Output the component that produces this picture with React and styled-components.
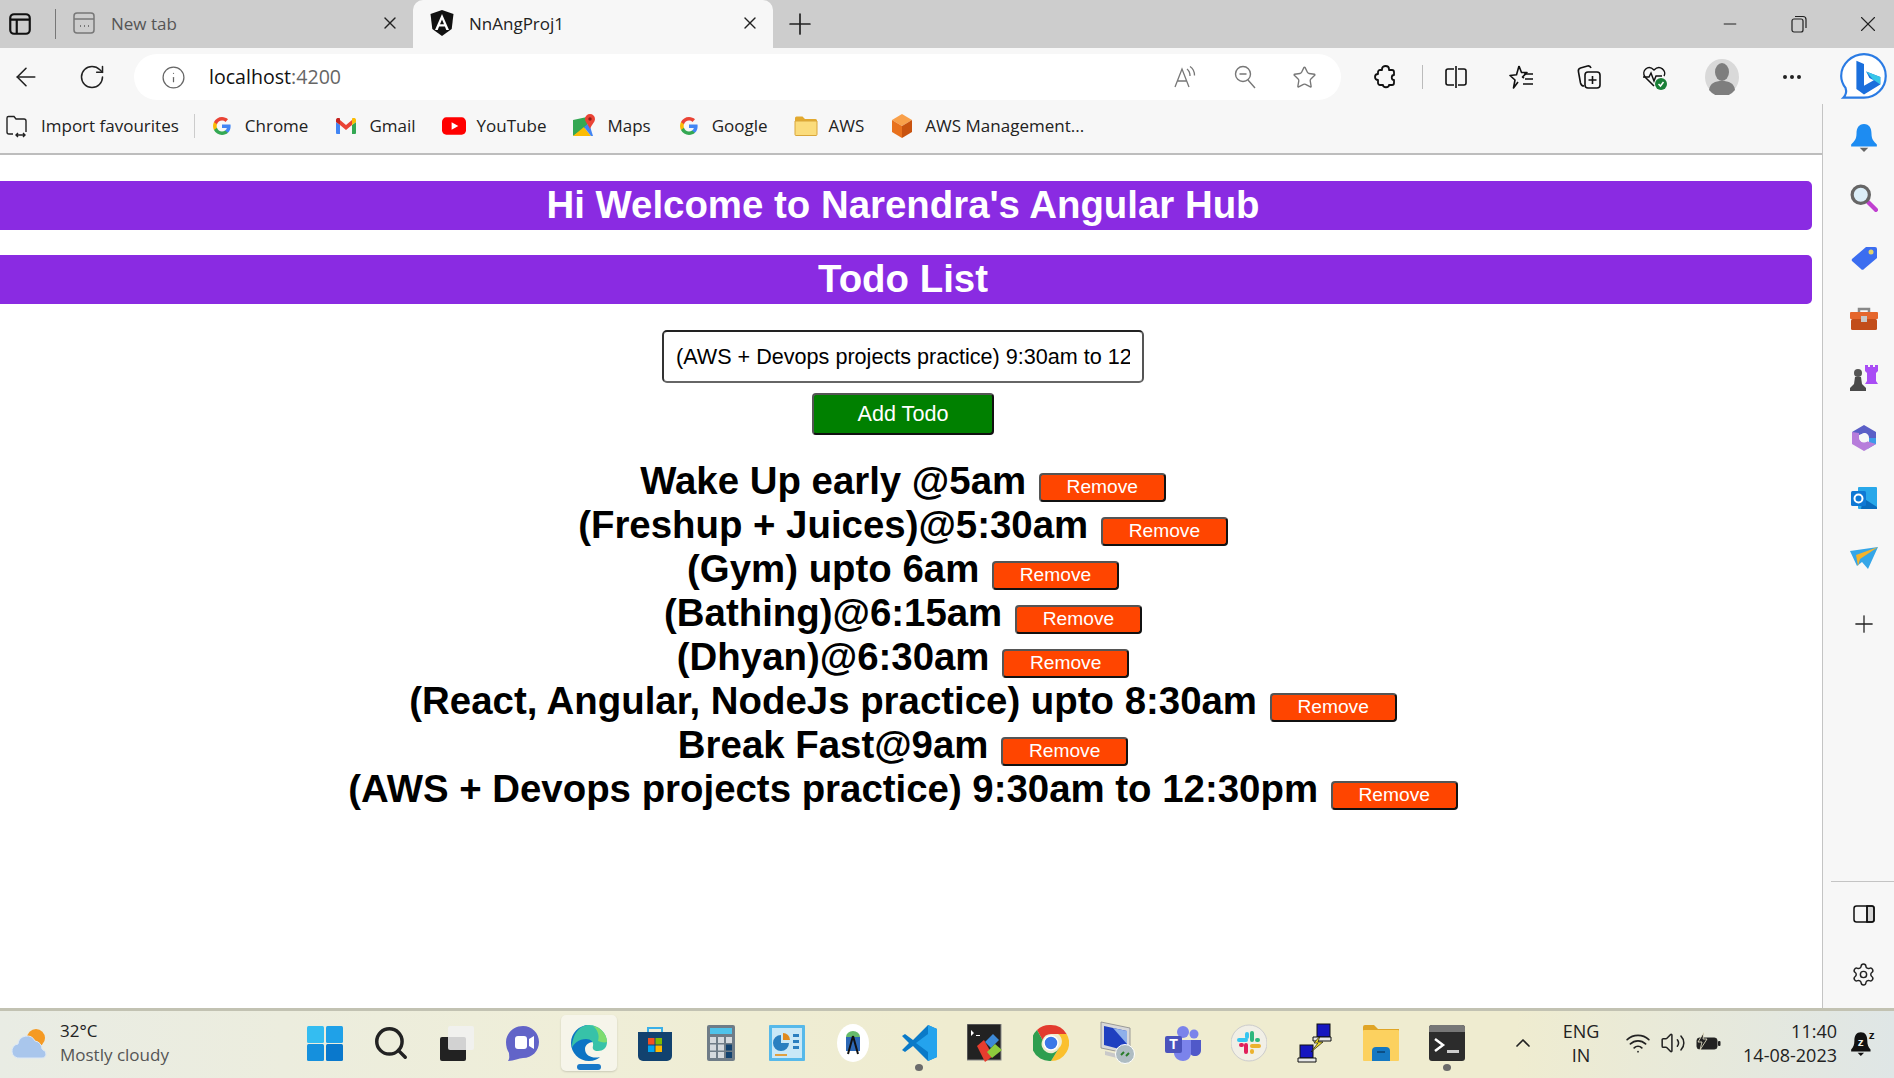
import styled, { createGlobalStyle } from 'styled-components';
import {
  ArrowLeft, RotateCw, Info, Star, Plus, X, Minus, Ellipsis, Settings, Volume2, Wifi, ChevronUp, Search,
} from 'lucide-react';

const todos = [
  'Wake Up early @5am',
  '(Freshup + Juices)@5:30am',
  '(Gym) upto 6am',
  '(Bathing)@6:15am',
  '(Dhyan)@6:30am',
  '(React, Angular, NodeJs practice) upto 8:30am',
  'Break Fast@9am',
  '(AWS + Devops projects practice) 9:30am to 12:30pm',
];

const GoogleG = () => (
  <svg width="18" height="18" viewBox="0 0 24 24">
    <path fill="#4285F4" d="M23.49 12.27c0-.79-.07-1.54-.19-2.27H12v4.51h6.47c-.29 1.48-1.14 2.73-2.4 3.58v3h3.86c2.26-2.09 3.56-5.17 3.56-8.82z" />
    <path fill="#34A853" d="M12 24c3.24 0 5.95-1.08 7.93-2.91l-3.86-3c-1.08.72-2.45 1.16-4.07 1.16-3.13 0-5.78-2.11-6.73-4.96H1.29v3.09C3.26 21.3 7.31 24 12 24z" />
    <path fill="#FBBC05" d="M5.27 14.29c-.25-.72-.38-1.49-.38-2.29s.14-1.57.38-2.29V6.62H1.29C.47 8.24 0 10.06 0 12s.47 3.76 1.29 5.38l3.98-3.09z" />
    <path fill="#EA4335" d="M12 4.75c1.77 0 3.35.61 4.6 1.8l3.42-3.42C17.95 1.19 15.24 0 12 0 7.31 0 3.26 2.7 1.29 6.62l3.98 3.09C6.22 6.86 8.87 4.75 12 4.75z" />
  </svg>
);

const ImportIcon = () => (
  <svg width="26" height="26" viewBox="0 0 26 26" fill="none" stroke="#222" strokeWidth="1.4">
    <path d="M9 21H5a2 2 0 0 1-2-2V5a1.500 1.500 0 0 1 1.500-1.500H10l2 2.500h8a2 2 0 0 1 2 2V19" />
    <path d="M12 22h9M14 20l-2 2 2 2M19 20l2 2-2 2" />
  </svg>
);

const GmailIcon = () => (
  <svg width="22" height="18" viewBox="0 0 22 18">
    <path fill="#4285F4" d="M1 5v11a1 1 0 0 0 1 1h3V8z" />
    <path fill="#34A853" d="M21 5v11a1 1 0 0 1-1 1h-3V8z" />
    <path fill="#EA4335" d="M5 8v-5l6 5 6-5v5l-6 5z" />
    <path fill="#C5221F" d="M1 5V3c0-2 2.500-2.500 4-1.500V8z" />
    <path fill="#FBBC04" d="M21 5V3c0-2-2.500-2.500-4-1.500V8z" />
  </svg>
);

const YoutubeIcon = () => (
  <svg width="25" height="18" viewBox="0 0 25 18">
    <rect width="25" height="18" rx="4.500" fill="#f00" />
    <path fill="#fff" d="M10 5l7 4-7 4z" />
  </svg>
);

const MapsIcon = () => (
  <svg width="24" height="24" viewBox="0 0 24 24">
    <path fill="#34A853" d="M1 6l14-3v10L1 22z" />
    <path fill="#FBBC04" d="M1 22l11-9 7 9z" />
    <path fill="#4285F4" d="M12 13l5-4 4 13h-2z" />
    <path fill="#EA4335" d="M18 0a5 5 0 0 1 5 5c0 3-3 5-5 10-2-5-5-7-5-10a5 5 0 0 1 5-5z" />
    <circle cx="18" cy="5" r="1.700" fill="#8e1c14" />
  </svg>
);

const FolderIcon = () => (
  <svg width="24" height="22" viewBox="0 0 24 22">
    <path fill="#e2a92f" d="M1 3a1.500 1.500 0 0 1 1.500-1.500h6L11 4h10.500A1.500 1.500 0 0 1 23 5.500V7H1z" />
    <path fill="#fbdc7c" stroke="#d9a63a" d="M1 6h22v13.500a1 1 0 0 1-1 1H2a1 1 0 0 1-1-1z" />
  </svg>
);

const CubeIcon = () => (
  <svg width="24" height="26" viewBox="0 0 24 26">
    <path fill="#f9a04a" d="M12 1l10 6-10 6L2 7z" />
    <path fill="#e8711d" d="M2 7l10 6v12L2 19z" />
    <path fill="#c9530f" d="M22 7l-10 6v12l10-6z" />
  </svg>
);

const bookmarks = [
  { label: 'Chrome', icon: <GoogleG /> },
  { label: 'Gmail', icon: <GmailIcon /> },
  { label: 'YouTube', icon: <YoutubeIcon /> },
  { label: 'Maps', icon: <MapsIcon /> },
  { label: 'Google', icon: <GoogleG /> },
  { label: 'AWS', icon: <FolderIcon /> },
  { label: 'AWS Management...', icon: <CubeIcon /> },
];

const PanelIcon = () => (
  <svg width="26" height="26" viewBox="0 0 24 24" fill="none" stroke="#111" strokeWidth="2">
    <rect x="3" y="3" width="18" height="18" rx="3.500" />
    <path d="M3 8h18M9 8v13" />
  </svg>
);

const NewTabIcon = () => (
  <svg width="22" height="24" viewBox="0 0 22 24" fill="none" stroke="#777" strokeWidth="1.500">
    <rect x="1" y="2" width="20" height="20" rx="3" />
    <path d="M1 8h20" />
    <path d="M7 15h1M11 15h1M15 15h1" strokeWidth="2" />
  </svg>
);

const AngularIcon = () => (
  <svg width="24" height="26" viewBox="0 0 24 26">
    <path fill="#111" d="M12 0l11.500 4-1.800 15L12 26 2.300 19 .5 4z" />
    <path fill="#fff" d="M12 4L5 20h2.700l1.400-3.500h5.800l1.400 3.500H19zm-2 10.300L12 9.500l2 4.800z" />
  </svg>
);

const RestoreIcon = () => (
  <svg width="16" height="18" viewBox="0 0 16 18" fill="none" stroke="#222" strokeWidth="1.200">
    <rect x="1" y="4" width="11" height="13" rx="2" />
    <path d="M4 1.500h8a3 3 0 0 1 3 3V13" />
  </svg>
);

const ReadAloudIcon = () => (
  <svg width="26" height="26" viewBox="0 0 26 26" fill="none" stroke="#777" strokeWidth="1.300">
    <path d="M3 23L10 5l7 18M5.500 17h9" />
    <path d="M15 5c2 1.500 3 4 3 7M18 2.500c3 2 4.500 5.500 4.500 9" />
  </svg>
);

const ZoomOutGlyph = () => (
  <svg width="24" height="26" viewBox="0 0 24 26" fill="none" stroke="#777" strokeWidth="1.400">
    <circle cx="10" cy="10" r="7.500" />
    <path d="M6.500 10h7M15 16l7 8" />
  </svg>
);

const PuzzleIcon = () => (
  <svg width="24" height="26" viewBox="0 0 24 26" fill="none" stroke="#111" strokeWidth="1.800" strokeLinejoin="round">
    <path d="M9 5c0-4 7-4 7 0v1h3a2 2 0 0 1 2 2v3c-3 0-3 5 0 5v3a2 2 0 0 1-2 2h-3c0 3-6 3-6 0H7a2 2 0 0 1-2-2v-3c-4 0-4-6 0-6V8a2 2 0 0 1 2-2h2z" />
  </svg>
);

const SplitIcon = () => (
  <svg width="24" height="26" viewBox="0 0 24 26" fill="none" stroke="#111" strokeWidth="1.600">
    <path d="M10 5H4a2 2 0 0 0-2 2v12a2 2 0 0 0 2 2h6M14 5h6a2 2 0 0 1 2 2v12a2 2 0 0 1-2 2h-6M12 2v22" />
  </svg>
);

const FavListIcon = () => (
  <svg width="26" height="26" viewBox="0 0 26 26" fill="none" stroke="#111" strokeWidth="1.600" strokeLinejoin="round">
    <path d="M10 2l2.500 6.500H18L13.500 13l1.500 1M9 18l-4.500 6 1.500-8-5-4.500 6.500-.8L10 2" />
    <path d="M15 10h9M16 15h8M14 20h10" />
  </svg>
);

const CollectionsIcon = () => (
  <svg width="26" height="26" viewBox="0 0 26 26" fill="none" stroke="#111" strokeWidth="1.600">
    <path d="M8 22c-2 0-3-1-3.500-3L2.500 8c-.5-2 .5-3.500 2-4l7-2c2-.5 3 .5 3.500 2" />
    <rect x="9" y="8" width="15" height="16" rx="3" />
    <path d="M16.500 12v8M12.500 16h8" />
  </svg>
);

const HealthIcon = () => (
  <svg width="28" height="28" viewBox="0 0 28 28" fill="none">
    <path stroke="#111" strokeWidth="1.500" d="M13 23L4 14C0 8 7 1 13 7c6-6 13 1 10 6" />
    <path stroke="#111" strokeWidth="1.500" d="M2 14h6l2-4 3 8 2-5h6" />
    <circle cx="20" cy="21" r="6" fill="#1a7f37" />
    <path stroke="#fff" strokeWidth="1.500" d="M17.500 21l2 2 3-4" />
  </svg>
);

const AvatarIcon = () => (
  <svg width="34" height="36" viewBox="0 0 34 36">
    <ellipse cx="17" cy="18" rx="17" ry="18" fill="#d9d9d9" />
    <ellipse cx="17" cy="13" rx="7" ry="9" fill="#7e7e7e" />
    <path fill="#7e7e7e" d="M4 31c1-7 6-9 13-9s12 2 13 9a17 18 0 0 1-26 0z" />
  </svg>
);

const BingIcon = () => (
  <svg width="50" height="50" viewBox="0 0 46 46" fill="none">
    <path fill="#fff" stroke="#2a7be4" strokeWidth="2" d="M23 2c11 0 20 9 20 20s-9 20-20 20H4c3-3 3-6 2-9-3-4-4-7-4-11C2 11 12 2 23 2z" />
    <path fill="#1b6fdc" d="M16 8l7 3v20l9-5-4-2-3-6 13 5v7l-15 9-7-5z" />
    <path fill="#37c6e8" d="M25 18l13 5v7l-7-5z" />
  </svg>
);

const BellIcon = () => (
  <svg width="28" height="30" viewBox="0 0 26 28">
    <path fill="#1d8cf2" d="M13 1c5 0 7 4 7 9 0 5 2 7 5 10v2H1v-2c3-3 5-5 5-10 0-5 2-9 7-9z" />
    <path fill="#666" d="M9 23h8l-4 4z" />
  </svg>
);

const MagnifierIcon = () => (
  <svg width="28" height="28" viewBox="0 0 26 26">
    <path stroke="#c040d0" strokeWidth="4" strokeLinecap="round" d="M16 16l8 8" />
    <circle cx="10" cy="10" r="8" fill="#dbeef8" stroke="#666" strokeWidth="3" />
  </svg>
);

const TagIcon = () => (
  <svg width="26" height="24" viewBox="0 0 26 24">
    <path fill="#3b6df0" d="M15 1h9a2 2 0 0 1 2 2v9L13 23a2 2 0 0 1-3 0L1 15a2 2 0 0 1 0-2z" />
    <circle cx="20" cy="6" r="2.500" fill="#e2d26a" />
  </svg>
);

const ToolboxIcon = () => (
  <svg width="28" height="24" viewBox="0 0 28 24">
    <path fill="none" stroke="#888" strokeWidth="2.500" d="M9 7V3h10v4" />
    <rect y="6" width="28" height="7" rx="1" fill="#e5662c" />
    <rect x="1" y="13" width="26" height="11" rx="1.500" fill="#c24d1a" />
    <rect x="11" y="10" width="6" height="6" fill="#c7c7c7" />
  </svg>
);

const ChessIcon = () => (
  <svg width="30" height="28" viewBox="0 0 30 28">
    <path fill="#a94df5" d="M16 1h3v2h2V1h3v2h2V1h3v6l-2 2v8l2 3H16l2-3V9l-2-2z" />
    <circle cx="9" cy="9" r="4" fill="#555" />
    <path fill="#4a4a4a" d="M6 13h6l1 7 4 4v3H1v-3l4-4z" />
  </svg>
);

const CopilotIcon = () => (
  <svg width="26" height="28" viewBox="0 0 26 28" fill="none">
    <path fill="#5b5fc7" d="M13 1l12 7v6h-7c0-3-2-5-5-5L1 14V8z" />
    <path fill="#3d9be9" d="M25 14v6l-12 7c6-2 5-9 5-13z" />
    <path fill="#b77ddb" d="M1 8v12l12 7 12-7-10-3c-3 2-7 0-7-3V9z" />
    <circle cx="13" cy="14" r="4.500" fill="#f7f7f7" />
  </svg>
);

const OutlookIcon = () => (
  <svg width="26" height="24" viewBox="0 0 26 24">
    <rect x="7" y="1" width="19" height="22" rx="1" fill="#28a8ea" />
    <path fill="#0a6cbd" d="M12 12l14 9v2H10z" />
    <rect y="5" width="15" height="15" rx="1.500" fill="#0f78d4" />
    <circle cx="7.500" cy="12.500" r="4" fill="none" stroke="#fff" strokeWidth="2" />
  </svg>
);

const SendIcon = () => (
  <svg width="28" height="22" viewBox="0 0 28 22">
    <path fill="#35a6e8" d="M0 4l28-4-10 22-6-7-5 4z" />
    <path fill="#f5b32a" d="M6 8L28 0 10 12l-2 7z" />
  </svg>
);

const SidePanelIcon = () => (
  <svg width="24" height="24" viewBox="0 0 24 24" fill="none" stroke="#111" strokeWidth="1.500">
    <rect x="2" y="4" width="20" height="16" rx="2.500" />
    <path d="M15 4v16" />
    <path d="M15 4h5a2 2 0 0 1 2 2v12a2 2 0 0 1-2 2h-5z" fill="#111" fillOpacity="0.15" />
  </svg>
);

const sideIcons = [
  <BellIcon />, <MagnifierIcon />, <TagIcon />, <ToolboxIcon />, <ChessIcon />,
  <CopilotIcon />, <OutlookIcon />, <SendIcon />,
];

const WeatherIcon = () => (
  <svg width="38" height="36" viewBox="0 0 38 36">
    <circle cx="25" cy="13" r="9" fill="#f59a23" />
    <path fill="#a9c6ec" stroke="#dce8f6" d="M9 33a7 7 0 0 1-2-14 9 9 0 0 1 17-3 8 8 0 0 1 7 8 9 9 0 0 1 1 1c4 1 4 8-1 8z" />
  </svg>
);

const StartIcon = () => (
  <svg width="36" height="36" viewBox="0 0 36 36">
    <rect width="17" height="17" y="1" rx="1.500" fill="#34bdf1" />
    <rect width="17" height="17" x="19" y="1" rx="1.500" fill="#1fa1e8" />
    <rect width="17" height="17" y="19" rx="1.500" fill="#1590dd" />
    <rect width="17" height="17" x="19" y="19" rx="1.500" fill="#0a78cc" />
  </svg>
);

const TaskViewIcon = () => (
  <svg width="36" height="36" viewBox="0 0 36 36">
    <rect x="1" y="12" width="26" height="24" rx="2" fill="#222" />
    <rect x="9" y="1" width="26" height="24" rx="2" fill="#f1f1f1" fillOpacity="0.85" />
  </svg>
);

const MeetIcon = () => (
  <svg width="34" height="36" viewBox="0 0 34 36">
    <path fill="#6264c8" d="M17 1c9 0 16 7 16 16s-7 16-16 16c-4 0-9 3-15 3 2-3 1-5 1-8-2-3-3-7-3-11C0 8 8 1 17 1z" />
    <rect x="9" y="11" width="12" height="13" rx="3" fill="#fff" />
    <path fill="#fff" d="M23 14l5-3v13l-5-3z" />
  </svg>
);

const EdgeIcon = () => (
  <svg width="36" height="36" viewBox="0 0 36 36">
    <path fill="#0c74c4" d="M18 0C8 0 0 8 0 18c0 10 8 18 18 18 5 0 9-2 11-4-7 2-15-1-15-8 0-4 4-7 8-7l-5-9z" />
    <path fill="#37c2a8" d="M18 0c10 0 18 8 18 17 0 6-4 9-9 9-4 0-6-2-5-5 1-4-2-7-7-7-7 0-13 5-14 9C1 10 8 0 18 0z" />
    <path fill="#7fdc6e" d="M36 17c0-8-7-15-14-16 4 3 7 9 5 15 3 1 6 2 9 1z" />
  </svg>
);

const StoreIcon = () => (
  <svg width="36" height="36" viewBox="0 0 36 36">
    <path fill="none" stroke="#3ab0e8" strokeWidth="2" d="M11 8V3h14v5" />
    <path fill="#12426f" d="M1 7h34v24a5 5 0 0 1-5 5H6a5 5 0 0 1-5-5z" />
    <rect x="11" y="13" width="6.500" height="6.500" fill="#f25022" />
    <rect x="18.500" y="13" width="6.500" height="6.500" fill="#7fba00" />
    <rect x="11" y="20.500" width="6.500" height="6.500" fill="#00a4ef" />
    <rect x="18.500" y="20.500" width="6.500" height="6.500" fill="#ffb900" />
  </svg>
);

const CalcIcon = () => (
  <svg width="28" height="36" viewBox="0 0 28 36">
    <rect width="28" height="36" rx="2" fill="#6f7c87" />
    <rect x="3" y="3" width="22" height="6" fill="#4fc3ea" />
    {[0, 1, 2].map(row => [0, 1, 2].map(col => (
      <rect key={`${row}${col}`} x={3 + col * 8} y={12 + row * 7.500} width="6" height="6" fill={col === 2 && row > 0 ? '#12426f' : '#d5dade'} />
    )))}
  </svg>
);

const DashboardIcon = () => (
  <svg width="36" height="36" viewBox="0 0 36 36">
    <rect width="36" height="36" rx="1" fill="#57b9ea" />
    <rect x="3" y="3" width="30" height="30" fill="#c9e8f7" />
    <path fill="#e08a1e" d="M14 8a7 7 0 0 1 7 7h-7z" />
    <path fill="#2a7fc0" d="M12 10a8 8 0 1 0 8 8h-8z" />
    <path fill="#2a7fc0" d="M24 9h6v3h-6zM24 15h6v3h-6zM24 21h6v3h-6z" />
    <path fill="#e0a040" d="M6 29h12v2H6z" />
  </svg>
);

const AndroidStudioIcon = () => (
  <svg width="32" height="38" viewBox="0 0 32 38">
    <ellipse cx="16" cy="19" rx="16" ry="19" fill="#fff" />
    <path fill="#66bb6a" d="M9 13a7 6 0 0 1 14 0z" />
    <rect x="9" y="13" width="14" height="14" fill="#2d68b5" />
    <path stroke="#111" strokeWidth="2" d="M16 12l-5 18M16 12l5 18" />
  </svg>
);

const VscodeIcon = () => (
  <svg width="36" height="38" viewBox="0 0 36 38">
    <path fill="#0a7ac8" d="M1 12l3-2 8 6L27 1l9 4v28l-9 4-15-15-8 6-3-2 7-7z" />
    <path fill="#24a3ed" d="M27 1l9 4v28l-9 4V10L15 19l12 9z" />
  </svg>
);

const JetbrainsIcon = () => (
  <svg width="36" height="38" viewBox="0 0 36 38">
    <rect width="34" height="36" fill="#222" stroke="#888" />
    <path fill="#fff" d="M4 6l3 3-3 3zM9 11h4v1H9z" />
    <path fill="#e63c2e" d="M10 22l7-6 9 16-8 6z" />
    <path fill="#3d89d6" d="M18 18l8-8 6 6-8 8z" />
    <path fill="#8ecb3c" d="M20 28l8-8 7 6-10 8z" />
  </svg>
);

const ChromeIcon = () => (
  <svg width="36" height="38" viewBox="0 0 36 36">
    <path fill="#e33b2e" d="M18 0a18 18 0 0 1 15.600 9H18a9 9 0 0 0-8.500 6L4 5A18 18 0 0 1 18 0z" />
    <path fill="#fbc02d" d="M33.600 9A18 18 0 0 1 18 36l8-13a9 9 0 0 0-1-14z" />
    <path fill="#2e9e4f" d="M4 5a18 18 0 0 0 14 31l8-13a9 9 0 0 1-16.500-8z" />
    <circle cx="18" cy="18" r="7" fill="#3b78e7" stroke="#fff" strokeWidth="1.500" />
  </svg>
);

const RemoteIcon = () => (
  <svg width="36" height="44" viewBox="0 0 36 44">
    <path fill="#d8d8d8" stroke="#888" strokeWidth="0.800" d="M2 1l29 6v26L2 27z" />
    <path fill="#1f3fc0" d="M5 5l23 5v20L5 24z" />
    <path fill="#8fb0ea" d="M14 7l14 3v13z" />
    <path fill="#c9c9c9" d="M6 30l12 3v4l-12-3z" />
    <circle cx="26" cy="33" r="9.500" fill="#aebcc2" stroke="#fff" />
    <path stroke="#2a7d2a" strokeWidth="2" fill="none" d="M22 34l3-3M30 32l-3 3" />
  </svg>
);

const TeamsIcon = () => (
  <svg width="36" height="36" viewBox="0 0 36 36">
    <circle cx="29" cy="9" r="4.500" fill="#7b83eb" />
    <circle cx="18" cy="7" r="6" fill="#7b83eb" />
    <path fill="#5059c9" d="M24 15h12v10c0 4-3 6-6 6s-6-2-6-6z" />
    <path fill="#7b83eb" d="M9 15h17v13c0 5-4 8-8 8s-9-3-9-8z" />
    <rect y="11" width="17" height="17" rx="2" fill="#4b53bc" />
    <text x="8.500" y="24" textAnchor="middle" fill="#fff" fontSize="14" fontWeight="700" fontFamily="Liberation Sans, sans-serif">T</text>
  </svg>
);

const SlackIcon = () => (
  <svg width="36" height="38" viewBox="0 0 36 36">
    <circle cx="18" cy="18" r="18" fill="#f1efe6" stroke="#ccc" />
    <path stroke="#36c5f0" strokeWidth="4" strokeLinecap="round" d="M16 9v3M8 15h7" />
    <path stroke="#2eb67d" strokeWidth="4" strokeLinecap="round" d="M21 8v7M26 15h1" />
    <path stroke="#e01e5a" strokeWidth="4" strokeLinecap="round" d="M10 20h1M15 20v7" />
    <path stroke="#ecb22e" strokeWidth="4" strokeLinecap="round" d="M21 21h7M21 26v1" />
  </svg>
);

const NetworkIcon = () => (
  <svg width="36" height="40" viewBox="0 0 36 40">
    <rect x="20" y="1" width="13" height="13" fill="#1616c0" stroke="#111" />
    <path fill="#e8e8e8" stroke="#111" d="M16 14h18v4H16z" />
    <rect x="3" y="22" width="13" height="13" fill="#1616c0" stroke="#111" />
    <path fill="#e8e8e8" stroke="#111" d="M1 35h18v4H1z" />
    <path fill="#f4e02a" stroke="#111" strokeWidth="0.700" d="M23 13l-6 7 4 0-7 9 12-10-5 0z" />
  </svg>
);

const ExplorerIcon = () => (
  <svg width="36" height="36" viewBox="0 0 36 36">
    <path fill="#e0a526" d="M0 2a2 2 0 0 1 2-2h9l4 4h21v6H0z" />
    <rect y="5" width="36" height="31" rx="1" fill="#fcd15f" />
    <path fill="#1578c2" d="M9 26a4 4 0 0 1 4-4h10a4 4 0 0 1 4 4v10H9z" />
    <rect x="14" y="26" width="8" height="2" fill="#0c4f85" />
  </svg>
);

const TerminalIcon = () => (
  <svg width="36" height="36" viewBox="0 0 36 36">
    <rect width="36" height="36" rx="3" fill="#2c2c2c" />
    <path fill="#777" d="M3 0h30a3 3 0 0 1 3 3v4H0V3a3 3 0 0 1 3-3z" />
    <path fill="none" stroke="#fff" strokeWidth="2.500" d="M6 14l8 6-8 6" />
    <rect x="18" y="25" width="12" height="3" fill="#ccc" />
  </svg>
);

const BatteryIcon = () => (
  <svg width="26" height="24" viewBox="0 0 26 24">
    <rect x="2" y="7" width="20" height="11" rx="2.500" fill="#222" stroke="#222" />
    <rect x="23" y="10" width="2.500" height="5" rx="1" fill="#222" />
    <path fill="#222" stroke="#f0ecd2" strokeWidth="0.800" d="M9 1L3 11h4l-2 8 7-11H8z" />
  </svg>
);

const QuietBellIcon = () => (
  <svg width="26" height="28" viewBox="0 0 24 26">
    <path fill="#111" d="M10 3c4 0 6 3 6 8 0 4 1 6 3 8v2H1v-2c2-2 3-4 3-8 0-5 2-8 6-8z" />
    <path fill="#111" d="M7 22h6l-3 3z" />
    <text x="10" y="16" textAnchor="middle" fill="#f0f2ea" fontSize="11" fontWeight="700" fontFamily="Liberation Sans, sans-serif">z</text>
    <text x="20" y="9" textAnchor="middle" fill="#111" fontSize="11" fontWeight="700" fontFamily="Liberation Sans, sans-serif">z</text>
  </svg>
);

const taskItems = [
  { id: 'start', icon: <StartIcon /> },
  { id: 'search', icon: <Search size={38} strokeWidth={2.2} color="#222" /> },
  { id: 'taskview', icon: <TaskViewIcon /> },
  { id: 'meet', icon: <MeetIcon /> },
  { id: 'edge', icon: <EdgeIcon />, active: true },
  { id: 'store', icon: <StoreIcon /> },
  { id: 'calc', icon: <CalcIcon /> },
  { id: 'dashboard', icon: <DashboardIcon /> },
  { id: 'android', icon: <AndroidStudioIcon /> },
  { id: 'vscode', icon: <VscodeIcon />, running: true },
  { id: 'jetbrains', icon: <JetbrainsIcon /> },
  { id: 'chrome', icon: <ChromeIcon /> },
  { id: 'remote', icon: <RemoteIcon /> },
  { id: 'teams', icon: <TeamsIcon /> },
  { id: 'slack', icon: <SlackIcon /> },
  { id: 'network', icon: <NetworkIcon /> },
  { id: 'explorer', icon: <ExplorerIcon /> },
  { id: 'terminal', icon: <TerminalIcon />, running: true },
];

export default function App() {
  return (
    <Screen>
      <GlobalStyle />
      <TabStrip>
        <PanelButton><PanelIcon /></PanelButton>
        <TabDivider />
        <InactiveTab>
          <NewTabIcon />
          <TabTitle>New tab</TabTitle>
          <X size={20} strokeWidth={1.6} color="#222" />
        </InactiveTab>
        <ActiveTab>
          <AngularIcon />
          <TabTitle $active>NnAngProj1</TabTitle>
          <X size={20} strokeWidth={1.6} color="#222" />
        </ActiveTab>
        <NewTabButton><Plus size={34} strokeWidth={1.2} color="#222" /></NewTabButton>
        <WindowControls>
          <WindowButton><Minus size={20} strokeWidth={1.2} color="#222" /></WindowButton>
          <WindowButton><RestoreIcon /></WindowButton>
          <WindowButton><X size={26} strokeWidth={1} color="#222" /></WindowButton>
        </WindowControls>
      </TabStrip>

      <Toolbar>
        <NavButton $width={52}><ArrowLeft size={30} strokeWidth={1.3} color="#222" /></NavButton>
        <NavButton $width={80}><RotateCw size={28} strokeWidth={1.3} color="#222" /></NavButton>
        <AddressBar>
          <Info size={25} strokeWidth={1.2} color="#666" />
          <AddressText>localhost<span>:4200</span></AddressText>
          <AddressActions>
            <ReadAloudIcon />
            <ZoomOutGlyph />
            <Star size={25} strokeWidth={1.3} color="#777" />
          </AddressActions>
        </AddressBar>
        <ToolbarIcons>
          <ToolSlot $width={62}><PuzzleIcon /></ToolSlot>
          <ToolDivider />
          <ToolSlot $width={66}><SplitIcon /></ToolSlot>
          <ToolSlot $width={66}><FavListIcon /></ToolSlot>
          <ToolSlot $width={67}><CollectionsIcon /></ToolSlot>
          <ToolSlot $width={66}><HealthIcon /></ToolSlot>
          <ToolSlot $width={68}><AvatarIcon /></ToolSlot>
          <ToolSlot $width={72}><Ellipsis size={24} strokeWidth={2} color="#222" /></ToolSlot>
          <ToolSlot $width={72}><BingIcon /></ToolSlot>
        </ToolbarIcons>
      </Toolbar>

      <Workspace>
        <BrowserPane>
          <BookmarkBar>
            <ImportIcon />
            <ImportLabel>Import favourites</ImportLabel>
            <BookmarkDivider />
            {bookmarks.map(mark => (
              <Bookmark key={mark.label}>
                <BookmarkIcon>{mark.icon}</BookmarkIcon>
                <span>{mark.label}</span>
              </Bookmark>
            ))}
          </BookmarkBar>
          <Page>
            <Banner>Hi Welcome to Narendra's Angular Hub</Banner>
            <Banner>Todo List</Banner>
            <TodoForm>
              <TodoInput readOnly value="(AWS + Devops projects practice) 9:30am to 12:30pm" />
              <AddButton>Add Todo</AddButton>
            </TodoForm>
            <TodoList>
              {todos.map(todo => (
                <TodoRow key={todo}>
                  {todo} <RemoveButton>Remove</RemoveButton>
                </TodoRow>
              ))}
            </TodoList>
          </Page>
        </BrowserPane>
        <Sidebar>
          <SideGroup>
            {sideIcons.map((icon, i) => <SideSlot key={i}>{icon}</SideSlot>)}
            <SideAdd><Plus size={28} strokeWidth={1.1} color="#222" /></SideAdd>
          </SideGroup>
          <SideFooter>
            <SideSlot><SidePanelIcon /></SideSlot>
            <SideSlot><Settings size={25} strokeWidth={1.4} color="#222" /></SideSlot>
          </SideFooter>
        </Sidebar>
      </Workspace>

      <Taskbar>
        <Weather>
          <WeatherIcon />
          <WeatherText>
            <span>32°C</span>
            <small>Mostly cloudy</small>
          </WeatherText>
        </Weather>
        {taskItems.map(item => (
          <TaskSlot key={item.id} $active={item.active} $running={item.running}>{item.icon}</TaskSlot>
        ))}
        <Tray>
          <ChevronUp size={24} strokeWidth={1.7} color="#222" />
          <Lang>ENG<br />IN</Lang>
          <TrayIcons>
            <Wifi size={26} strokeWidth={1.6} color="#222" />
            <Volume2 size={26} strokeWidth={1.4} color="#222" />
            <BatteryIcon />
          </TrayIcons>
          <Clock>11:40<br />14-08-2023</Clock>
          <QuietBellIcon />
        </Tray>
      </Taskbar>
    </Screen>
  );
}

const GlobalStyle = createGlobalStyle`
  html, body {
    margin: 0;
    padding: 0;
    background: #fff;
  }

  body {
    font-family: 'Open Sans', 'Liberation Sans', sans-serif;
  }
`;

const Screen = styled.div`
  width: 1894px;
  height: 1078px;
  display: flex;
  flex-direction: column;
  overflow: hidden;
`;

const TabStrip = styled.div`
  height: 48px;
  flex: none;
  display: flex;
  align-items: stretch;
  background: #cdcdcd;
`;

const PanelButton = styled.div`
  width: 40px;
  display: flex;
  align-items: center;
  justify-content: center;
`;

const TabDivider = styled.div`
  width: 1px;
  height: 30px;
  margin: 9px 0 0 15px;
  background: #777;
`;

const InactiveTab = styled.div`
  width: 357px;
  display: flex;
  align-items: center;
  gap: 16px;
  padding: 0 13px 2px 17px;
  box-sizing: border-box;
`;

const ActiveTab = styled.div`
  width: 360px;
  display: flex;
  align-items: center;
  gap: 15px;
  padding: 0 13px 2px 17px;
  box-sizing: border-box;
  background: #f7f7f7;
  border-radius: 10px 10px 0 0;
`;

const TabTitle = styled.span`
  flex: 1;
  font-size: 17px;
  color: ${props => (props.$active ? '#222' : '#555')};
`;

const NewTabButton = styled.div`
  width: 54px;
  display: flex;
  align-items: center;
  justify-content: center;
`;

const WindowControls = styled.div`
  margin-left: auto;
  margin-right: -8px;
  display: flex;
`;

const WindowButton = styled.div`
  width: 69px;
  display: flex;
  align-items: center;
  justify-content: center;
`;

const Toolbar = styled.div`
  height: 56px;
  flex: none;
  box-sizing: border-box;
  padding-top: 2px;
  display: flex;
  align-items: center;
  background: #f7f7f7;
`;

const NavButton = styled.div`
  width: ${props => props.$width}px;
  flex: none;
  display: flex;
  justify-content: center;
`;

const AddressBar = styled.div`
  width: 1207px;
  height: 46px;
  flex: none;
  box-sizing: border-box;
  margin-left: 2px;
  padding: 0 24px 0 27px;
  display: flex;
  align-items: center;
  gap: 23px;
  background: #fff;
  border-radius: 23px;
`;

const AddressText = styled.div`
  padding-bottom: 2px;
  font-size: 19.6px;
  color: #111;

  span {
    color: #666;
  }
`;

const AddressActions = styled.div`
  margin-left: auto;
  display: flex;
  align-items: center;
  gap: 35px;
`;

const ToolbarIcons = styled.div`
  flex: none;
  display: flex;
  align-items: center;
  margin-left: 13px;
`;

const ToolSlot = styled.div`
  width: ${props => props.$width}px;
  flex: none;
  display: flex;
  justify-content: center;
  align-items: center;
`;

const ToolDivider = styled.div`
  width: 1px;
  height: 24px;
  flex: none;
  margin-left: 6px;
  background: #bbb;
`;

const Workspace = styled.div`
  flex: 1;
  min-height: 0;
  display: flex;
`;

const BrowserPane = styled.div`
  width: 1822px;
  flex: none;
  display: flex;
  flex-direction: column;
`;

const BookmarkBar = styled.div`
  height: 51px;
  flex: none;
  display: flex;
  align-items: center;
  padding: 0 0 6px 4px;
  box-sizing: border-box;
  background: #f7f7f7;
  border-bottom: 2px solid #bdbdbd;
  font-size: 17px;
  color: #222;
`;

const ImportLabel = styled.span`
  margin-left: 11px;
  white-space: nowrap;
`;

const BookmarkDivider = styled.div`
  width: 1px;
  height: 24px;
  margin: 0 15px;
  background: #ccc;
`;

const Bookmark = styled.div`
  display: flex;
  align-items: center;
  gap: 11px;
  margin-right: 26px;
  white-space: nowrap;
`;

const BookmarkIcon = styled.div`
  display: flex;
  width: 24px;
  justify-content: center;
`;

const Page = styled.main`
  flex: 1;
  background: #fff;
  padding-top: 26px;
  font-family: 'Liberation Sans', Arial, sans-serif;
`;

const Banner = styled.h1`
  width: 1812px;
  height: 49px;
  box-sizing: border-box;
  margin: 0 0 25px;
  padding-right: 6px;
  background: #8a2be2;
  border-radius: 0 5px 5px 0;
  color: #fff;
  font-size: 38.4px;
  line-height: 48px;
  font-weight: 700;
  text-align: center;
`;

const TodoForm = styled.div`
  width: 1806px;
  display: flex;
  flex-direction: column;
  align-items: center;
  gap: 10px;
  margin-top: 26px;
`;

const TodoInput = styled.input`
  width: 482px;
  height: 53px;
  box-sizing: border-box;
  padding: 0 12px;
  border: 2px solid #222;
  border-color: #222 #555 #666 #333;
  border-radius: 5px;
  background: #fff;
  color: #000;
  font-family: inherit;
  font-size: 21.6px;
  outline: none;
`;

const AddButton = styled.button`
  width: 182px;
  height: 42px;
  padding: 0;
  border: 2px solid;
  border-color: #555 #111 #111 #555;
  border-radius: 4px;
  background: #008000;
  color: #fff;
  font-family: inherit;
  font-size: 21.6px;
`;

const TodoList = styled.div`
  width: 1806px;
  margin-top: 24px;
`;

const TodoRow = styled.div`
  height: 44px;
  text-align: center;
  color: #000;
  font-size: 38.4px;
  line-height: 44px;
  font-weight: 700;
  white-space: nowrap;
`;

const RemoveButton = styled.button`
  width: 127px;
  height: 29px;
  margin-left: 2px;
  padding: 0;
  vertical-align: 1px;
  border: 2px solid;
  border-color: #555 #111 #111 #555;
  border-radius: 4px;
  background: #ff4500;
  color: #fff;
  font-family: inherit;
  font-size: 19.2px;
  font-weight: 400;
  line-height: 24px;
`;

const Sidebar = styled.aside`
  flex: 1;
  display: flex;
  flex-direction: column;
  justify-content: space-between;
  padding: 4px 0 4px 10px;
  background: #f7f7f7;
  border-left: 1px solid #c4c4c4;
`;

const SideGroup = styled.div`
  display: flex;
  flex-direction: column;
`;

const SideFooter = styled.div`
  display: flex;
  flex-direction: column;
  margin: 0 0 0 -2px;
  padding: 2px 0 0 2px;
  border-top: 1px solid #c4c4c4;
`;

const SideSlot = styled.div`
  height: 60px;
  display: flex;
  align-items: center;
  justify-content: center;
`;

const SideAdd = styled(SideSlot)`
  margin-top: 6px;
`;

const Taskbar = styled.footer`
  height: 70px;
  flex: none;
  display: flex;
  align-items: center;
  box-sizing: border-box;
  padding-bottom: 4px;
  border-top: 3px solid #c2c2b2;
  background: linear-gradient(90deg, #e9ece4 0%, #efeed8 30%, #efecd0 50%, #efecd0 80%, #dfe6e6 100%);
`;

const Weather = styled.div`
  width: 292px;
  flex: none;
  display: flex;
  align-items: center;
  gap: 11px;
  padding-left: 11px;
  box-sizing: border-box;
`;

const WeatherText = styled.div`
  display: flex;
  flex-direction: column;
  font-size: 17px;
  line-height: 24px;
  color: #222;

  small {
    font-size: 17px;
    color: #555;
  }
`;

const TaskSlot = styled.div`
  width: 66px;
  height: 56px;
  flex: none;
  position: relative;
  display: flex;
  align-items: center;
  justify-content: center;

  ${props => props.$active && `
    &::before {
      content: '';
      position: absolute;
      inset: 0 5px;
      background: #f6f5ea;
      border-radius: 5px;
      box-shadow: 0 1px 2px rgba(0, 0, 0, 0.15);
    }
    &::after {
      content: '';
      position: absolute;
      left: 21px;
      bottom: 1px;
      width: 24px;
      height: 6px;
      border-radius: 3px;
      background: #1878c8;
    }
    svg { position: relative; z-index: 1; }
  `}

  ${props => props.$running && `
    &::after {
      content: '';
      position: absolute;
      left: 29px;
      bottom: 0;
      width: 8px;
      height: 7px;
      border-radius: 50%;
      background: #6b6b6b;
    }
  `}
`;

const Tray = styled.div`
  flex: 1;
  display: flex;
  align-items: center;
  padding-left: 31px;
  color: #222;
`;

const Lang = styled.div`
  width: 50px;
  margin-left: 21px;
  text-align: center;
  font-size: 18px;
  line-height: 24px;
`;

const TrayIcons = styled.div`
  display: flex;
  align-items: center;
  gap: 9px;
  margin-left: 19px;
`;

const Clock = styled.div`
  width: 116px;
  margin: 0 13px 0 0;
  text-align: right;
  font-size: 18px;
  line-height: 24px;
`;
